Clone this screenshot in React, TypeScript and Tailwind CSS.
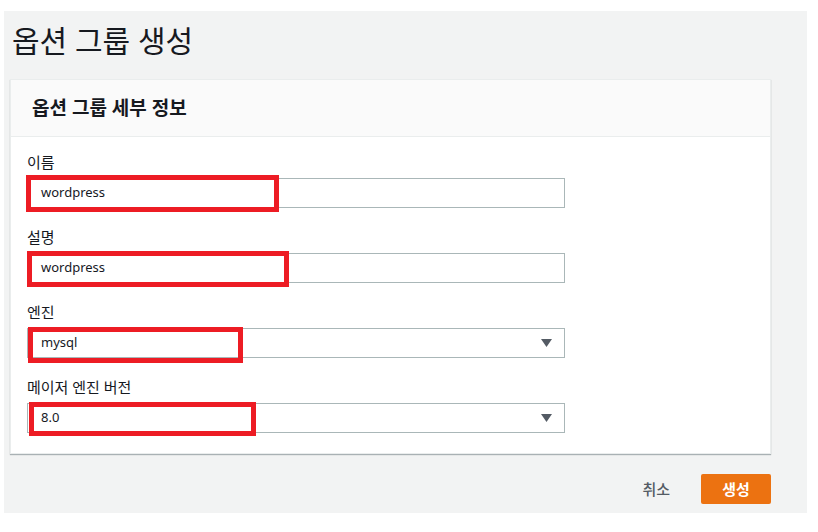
/**
 * CreateOptionGroup — RDS option group form (annotated screenshot)
 */

const FONT = "font-['Noto_Sans','Noto_Sans_CJK_KR',sans-serif]";

interface Mark {
  left: number;
  top: number;
  width: number;
  height: number;
}

interface FieldProps {
  label: string;
  value: string;
  select?: boolean;
  mark: Mark;
}

function Field({ label, value, select, mark }: FieldProps) {
  return (
    <div className="flex flex-col">
      <div className="h-[20px] text-[15px] leading-[20px] text-[#16191f]">{label}</div>
      <div className="relative mt-[6px] w-[538px]">
        <div className="flex h-[30px] items-center justify-between border border-[#aab7b8] bg-white pl-[13px] pr-[12px] text-[13px] text-[#16191f]">
          <span>{value}</span>
          {select && (
            <svg width="11" height="8" viewBox="0 0 11 8">
              <path d="M0 0 H11 L5.5 8 Z" fill="#545b64" />
            </svg>
          )}
        </div>
        {/* red annotation box */}
        <div
          className="pointer-events-none absolute border-[5px] border-[#ed1c24]"
          style={{ left: mark.left, top: mark.top, width: mark.width, height: mark.height }}
        />
      </div>
    </div>
  );
}

export default function App() {
  return (
    <div className={`h-[532px] w-[818px] bg-white pt-[11px] pl-[4px] ${FONT}`}>
      <div className="flex h-[502px] w-[803px] flex-col bg-[#f2f3f3]">
        {/* Page title */}
        <h1 className="ml-[8px] mt-[10px] h-[40px] text-[30px] font-normal leading-[40px] text-[#16191f]">
          옵션 그룹 생성
        </h1>

        {/* Card */}
        <div className="ml-[6px] mt-[18px] w-[761px] border border-[#eaeded] bg-white shadow-[0_1px_1px_0_rgba(0,28,36,0.3)]">
          <div className="flex h-[57px] items-center border-b border-[#eaeded] bg-[#fafafa] pl-[21px]">
            <h2 className="text-[19px] font-bold text-[#16191f]">옵션 그룹 세부 정보</h2>
          </div>

          <div className="flex flex-col gap-[19px] pl-[16px] pt-[15px] pb-[20px]">
            <Field label="이름" value="wordpress" mark={{ left: -1, top: -3, width: 253, height: 37 }} />
            <Field label="설명" value="wordpress" mark={{ left: 0, top: -2, width: 262, height: 36 }} />
            <Field label="엔진" value="mysql" select mark={{ left: 1, top: -1, width: 215, height: 36 }} />
            <Field label="메이저 엔진 버전" value="8.0" select mark={{ left: 2, top: -1, width: 227, height: 34 }} />
          </div>
        </div>

        {/* Actions */}
        <div className="ml-[6px] mt-[20px] flex w-[761px] items-center justify-end">
          <button className="mr-[31px] text-[15px] font-medium text-[#545b64]">취소</button>
          <button className="h-[30px] w-[70px] rounded-[2px] bg-[#ec7211] text-[15px] font-bold text-white">
            생성
          </button>
        </div>
      </div>
    </div>
  );
}
